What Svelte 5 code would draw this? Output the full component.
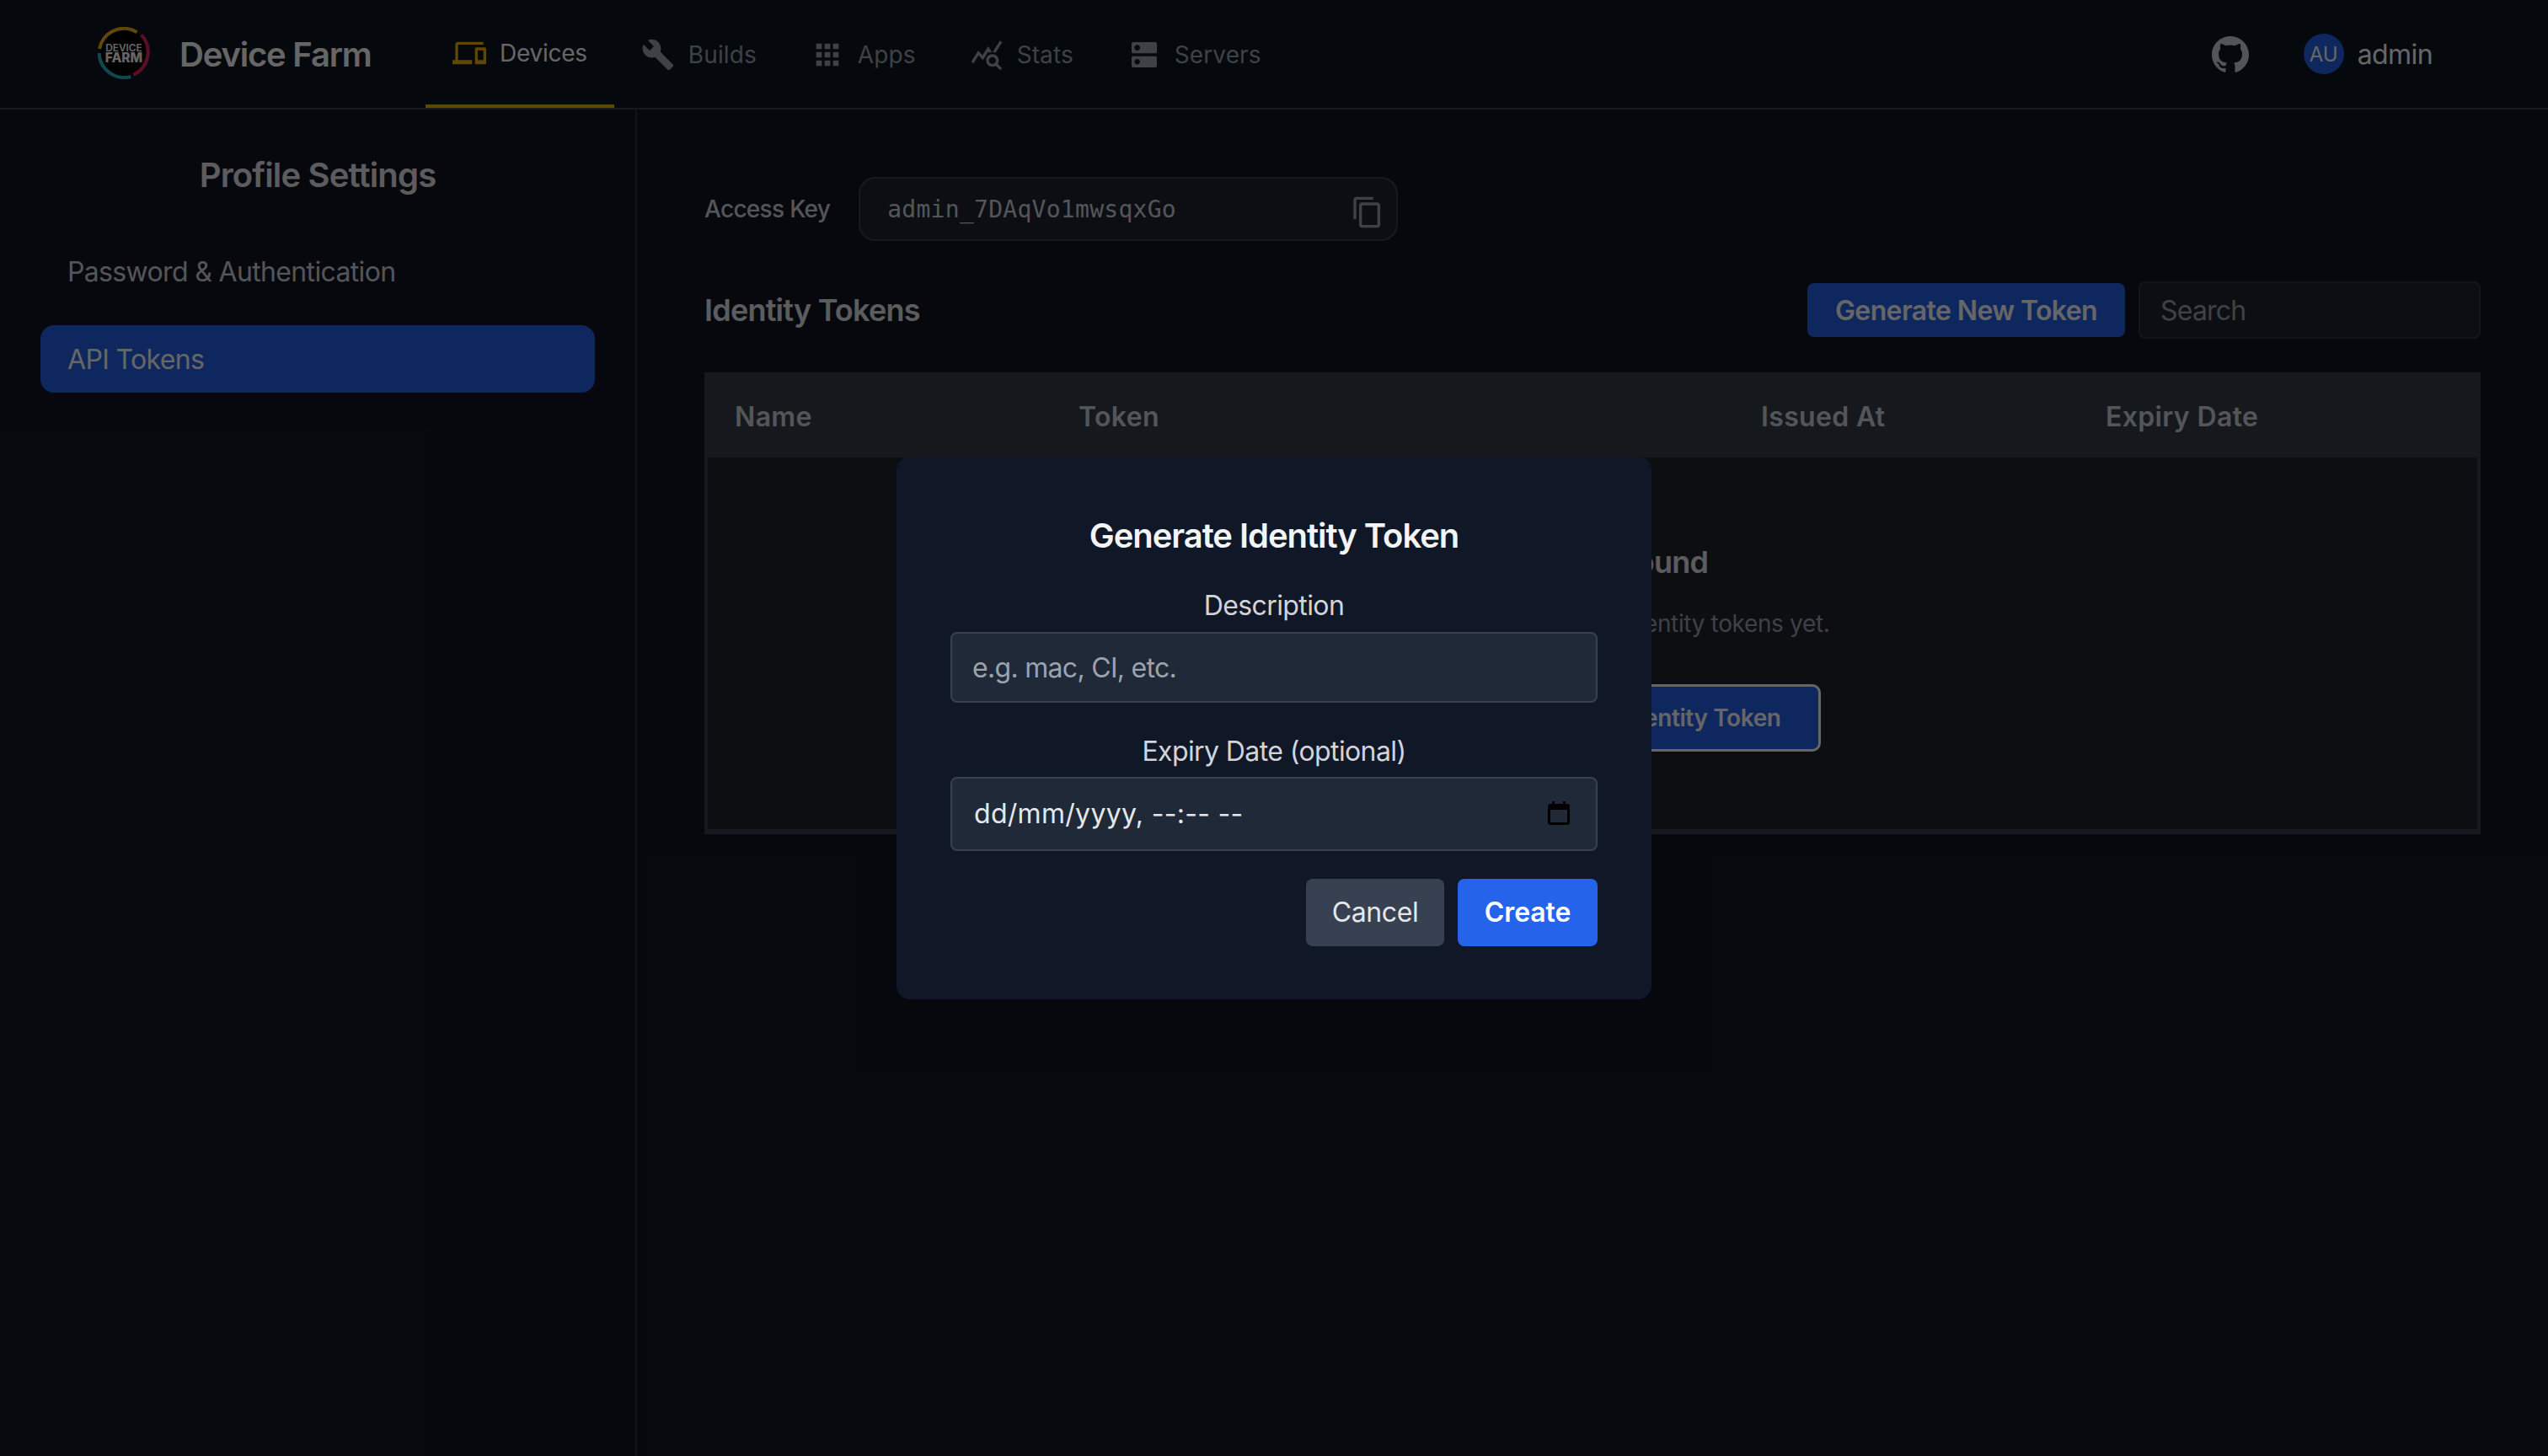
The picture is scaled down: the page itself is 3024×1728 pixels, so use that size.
<script>
  const tabs = [
    { label: 'Devices', active: true, d: 'M4 6h18V4H4c-1.1 0-2 .9-2 2v11H0v3h14v-3H4V6zm19 2h-6c-.55 0-1 .45-1 1v10c0 .55.45 1 1 1h6c.55 0 1-.45 1-1V9c0-.55-.45-1-1-1zm-1 9h-4v-7h4v7z' },
    { label: 'Builds', d: 'M22.7 19l-9.1-9.1c.9-2.3.4-5-1.5-6.9-2-2-5-2.4-7.4-1.3L9 6 6 9 1.6 4.7C.4 7.1.9 10.1 2.9 12.1c1.9 1.9 4.6 2.4 6.9 1.5l9.1 9.1c.4.4 1 .4 1.4 0l2.3-2.3c.5-.4.5-1.1.1-1.4z' },
    { label: 'Apps', d: 'M4 8h4V4H4v4zm6 12h4v-4h-4v4zm-6 0h4v-4H4v4zm0-6h4v-4H4v4zm6 0h4v-4h-4v4zm6-10v4h4V4h-4zm-6 4h4V4h-4v4zm6 6h4v-4h-4v4zm0 6h4v-4h-4v4z' },
    { label: 'Stats', d: 'M19.88 18.47c.44-.7.7-1.51.7-2.39 0-2.49-2.01-4.5-4.5-4.5s-4.5 2.01-4.5 4.5 2.01 4.5 4.49 4.5c.88 0 1.7-.26 2.39-.7L21.58 23 23 21.58l-3.12-3.11zm-3.8.11c-1.38 0-2.5-1.12-2.5-2.5s1.12-2.5 2.5-2.5 2.5 1.12 2.5 2.5-1.12 2.5-2.5 2.5zm-.36-8.5c-.74.02-1.45.18-2.1.45l-.55-.83-3.8 6.18-3.01-3.52-3.63 5.81L1 17l5-8 3 3.5L13 6l2.72 4.08zm2.59.5c-.64-.28-1.33-.45-2.05-.49L21.38 2 23 3.18l-4.69 7.4z' },
    { label: 'Servers', d: 'M20 13H4c-.55 0-1 .45-1 1v6c0 .55.45 1 1 1h16c.55 0 1-.45 1-1v-6c0-.55-.45-1-1-1zM7 19c-1.1 0-2-.9-2-2s.9-2 2-2 2 .9 2 2-.9 2-2 2zM20 3H4c-.55 0-1 .45-1 1v6c0 .55.45 1 1 1h16c.55 0 1-.45 1-1V4c0-.55-.45-1-1-1zM7 9c-1.1 0-2-.9-2-2s.9-2 2-2 2 .9 2 2-.9 2-2 2z' }
  ];
  const columns = ['Name', 'Token', 'Issued At', 'Expiry Date'];
</script>

<div class="page">
  <header class="topbar">
    <div class="brand">
      <svg class="logo" viewBox="0 0 60 60" aria-hidden="true">
        <circle cx="30" cy="30" r="27" fill="#000" />
        <path d="M2 25 A 28.5 28.5 0 0 1 45 6" fill="none" stroke="#f0ae12" stroke-width="4" />
        <path d="M50 9 A 29 29 0 0 1 41 55" fill="none" stroke="#e0265e" stroke-width="4" />
        <path d="M38 57 A 29 29 0 0 1 1.5 30" fill="none" stroke="#2bb3bf" stroke-width="4" />
        <text x="30" y="28.5" class="logo-a" text-anchor="middle">DEVICE</text>
        <text x="30" y="41" class="logo-b" text-anchor="middle">FARM</text>
      </svg>
      <span class="brand-name">Device Farm</span>
    </div>
    <nav class="tabs">
      {#each tabs as t}
        <a class="tab" class:active={t.active} href="#top">
          <svg class="tab-icon" viewBox="0 0 24 24" aria-hidden="true"><path d={t.d} /></svg>
          <span>{t.label}</span>
        </a>
      {/each}
    </nav>
    <div class="account">
      <svg class="github" viewBox="0 0 16 16" aria-hidden="true"><path d="M8 0C3.58 0 0 3.58 0 8c0 3.54 2.29 6.53 5.47 7.59.4.07.55-.17.55-.38 0-.19-.01-.82-.01-1.49-2.01.37-2.53-.49-2.69-.94-.09-.23-.48-.94-.82-1.13-.28-.15-.68-.52-.01-.53.63-.01 1.08.58 1.23.82.72 1.21 1.87.87 2.33.66.07-.52.28-.87.51-1.07-1.78-.2-3.64-.89-3.64-3.95 0-.87.31-1.59.82-2.15-.08-.2-.36-1.02.08-2.12 0 0 .67-.21 2.2.82.64-.18 1.32-.27 2-.27.68 0 1.36.09 2 .27 1.53-1.04 2.2-.82 2.2-.82.44 1.1.16 1.92.08 2.12.51.56.82 1.27.82 2.15 0 3.07-1.87 3.75-3.65 3.95.29.25.54.73.54 1.48 0 1.07-.01 1.93-.01 2.2 0 .21.15.46.55.38A8.013 8.013 0 0016 8c0-4.42-3.58-8-8-8z" /></svg>
      <div class="user">
        <span class="avatar">AU</span>
        <span class="username">admin</span>
      </div>
    </div>
  </header>

  <div class="body">
    <aside class="sidebar">
      <h2>Profile Settings</h2>
      <div class="side-list">
        <div class="side-item">Password &amp; Authentication</div>
        <div class="side-item selected">API Tokens</div>
      </div>
    </aside>

    <main class="main">
      <div class="access">
        <span class="access-label">Access Key</span>
        <div class="access-box">
          <code>admin_7DAqVo1mwsqxGo</code>
          <svg class="copy" viewBox="0 0 24 24" aria-hidden="true"><path d="M16 1H4c-1.1 0-2 .9-2 2v14h2V3h12V1zm3 4H8c-1.1 0-2 .9-2 2v14c0 1.1.9 2 2 2h11c1.1 0 2-.9 2-2V7c0-1.1-.9-2-2-2zm0 16H8V7h11v14z" /></svg>
        </div>
      </div>

      <div class="tokens-head">
        <h3>Identity Tokens</h3>
        <div class="tokens-actions">
          <button class="primary-dim">Generate New Token</button>
          <input class="search" placeholder="Search" />
        </div>
      </div>

      <div class="table">
        <div class="thead">
          {#each columns as c}<div class="th">{c}</div>{/each}
        </div>
        <div class="empty">
          <h4>No tokens found</h4>
          <p>You haven't created any identity tokens yet.</p>
          <button class="empty-btn">Generate Your First Identity Token</button>
        </div>
      </div>
    </main>
  </div>

  <div class="overlay">
    <div class="modal">
      <h2>Generate Identity Token</h2>
      <label class="field">
        <span>Description</span>
        <input placeholder="e.g. mac, CI, etc." />
      </label>
      <div class="field date-field">
        <span>Expiry Date (optional)</span>
        <div class="date">
          <span class="date-value">dd/mm/yyyy, --:-- --</span>
          <svg class="cal" viewBox="0 0 26 28" aria-hidden="true"><path fill-rule="evenodd" d="M5 0h3v3h10V0h3v3h2a3 3 0 0 1 3 3v19a3 3 0 0 1-3 3H3a3 3 0 0 1-3-3V6a3 3 0 0 1 3-3h2V0zM3 10v15h20V10H3z" /></svg>
        </div>
      </div>
      <div class="modal-actions">
        <button class="cancel">Cancel</button>
        <button class="create">Create</button>
      </div>
    </div>
  </div>
</div>

<style>
  :global(body) { margin: 0; background: #0d1422; }
  * { box-sizing: border-box; }
  .page {
    position: relative;
    width: 3024px;
    height: 1728px;
    overflow: hidden;
    font-family: Inter, "Liberation Sans", sans-serif;
    color: #fff;
    background: #0f1623;
  }
  h2, h3, h4, p { margin: 0; }
  button, input { font-family: inherit; }

  .topbar {
    height: 130px;
    display: flex;
    align-items: stretch;
    padding: 0 137px 0 116px;
    background: #0d1422;
    border-bottom: 2px solid #364150;
  }
  .brand { display: flex; align-items: center; gap: 35px; width: 389px; }
  .logo { width: 62px; height: 62px; flex: none; margin-top: -2px; }
  .logo-a { font: 600 11.5px Inter, sans-serif; fill: #fff; }
  .logo-b { font: 800 15px Inter, sans-serif; fill: #fff; }
  .brand-name { font-size: 40px; font-weight: 600; white-space: nowrap; letter-spacing: -1.2px; }
  .tabs { display: flex; align-items: stretch; }
  .tab {
    display: flex;
    align-items: center;
    gap: 16px;
    padding: 6px 32px 0;
    font-size: 28px;
    color: #9ca3af;
    text-decoration: none;
    border-bottom: 4px solid transparent;
    letter-spacing: .1px;
  }
  .tab.active { color: #fff; border-bottom-color: #eab308; padding-top: 2px; letter-spacing: -.25px; }
  .tab-icon { width: 40px; height: 40px; fill: #9ca3af; flex: none; }
  .tab.active .tab-icon { fill: #eab308; }
  .account { margin-left: auto; display: flex; align-items: center; gap: 65px; }
  .github { width: 44px; height: 44px; fill: #cbd5e1; flex: none; margin-top: 2px; }
  .user { display: flex; align-items: center; gap: 16px; }
  .avatar {
    width: 48px; height: 48px; border-radius: 50%;
    background: #2563eb;
    display: flex; align-items: center; justify-content: center;
    font-size: 24px;
    color: #fff;
  }
  .username { font-size: 32px; letter-spacing: -.6px; }

  .body { display: flex; height: 1598px; }
  .sidebar {
    width: 756px;
    flex: none;
    padding: 48px;
    border-right: 2px solid #28313f;
  }
  .sidebar h2 { font-size: 40px; font-weight: 600; text-align: center; line-height: 60px; color: #e5e7eb; letter-spacing: -.85px; }
  .side-list { display: flex; flex-direction: column; gap: 24px; margin-top: 44px; }
  .side-item {
    height: 80px; border-radius: 16px; padding: 0 32px;
    display: flex; align-items: center;
    font-size: 32px; color: #d1d5db; letter-spacing: -.65px;
  }
  .side-item.selected { background: #2563eb; color: #fff; }

  .main { flex: 1; min-width: 0; padding: 80px 80px; }
  .access { display: flex; align-items: center; gap: 34px; }
  .access-label { font-size: 28px; font-weight: 500; color: #d1d5db; letter-spacing: -.7px; }
  .access-box {
    width: 640px; height: 76px; border-radius: 20px;
    display: flex; align-items: center; justify-content: space-between;
    padding: 0 14px 0 32px;
    background: #1e2533;
    border: 2px solid #374151;
  }
  code { font-family: "DejaVu Sans Mono", "Liberation Mono", monospace; font-size: 28px; letter-spacing: .28px; color: #d1d5db; }
  .copy { width: 40px; height: 40px; fill: #9ca3af; flex: none; margin-top: 8px; }

  .tokens-head { display: flex; align-items: center; justify-content: space-between; margin-top: 48px; height: 68px; }
  .tokens-head h3 { font-size: 36px; font-weight: 600; color: #e5e7eb; letter-spacing: -.77px; }
  .tokens-actions { display: flex; align-items: center; gap: 16px; }
  .primary-dim {
    height: 64px; width: 377px; border: 0; border-radius: 8px;
    background: #2563eb; color: #fff;
    font-size: 32px; font-weight: 600; letter-spacing: -.6px;
  }
  .search {
    width: 406px; height: 68px; border-radius: 8px;
    background: #1e2533; border: 2px solid #2e3847;
    padding: 0 24px; font-size: 32px; color: #fff; outline: 0; letter-spacing: -.8px;
  }
  .search::placeholder { color: #9ca3af; opacity: 1; }

  .table {
    margin-top: 40px;
    height: 548px;
    border: 4px solid #323d4f;
    border-bottom-width: 6px;
    background: #1f252e;
  }
  .thead { display: grid; grid-template-columns: 408px 810px 409px 1fr; align-items: center; background: #363f4d; margin: -4px -4px 0; padding: 4px 4px 0; box-sizing: content-box; height: 97px; }
  .th { padding-left: 32px; font-size: 32px; font-weight: 600; color: #d1d5db; letter-spacing: .35px; }
  .empty { text-align: center; padding-top: 100px; }
  .empty h4 { font-size: 36px; font-weight: 600; color: #e5e7eb; line-height: 48px; letter-spacing: -.77px; }
  .empty p { margin-top: 28px; font-size: 28px; line-height: 42px; color: #9ca3af; letter-spacing: -.35px; }
  .empty-btn {
    margin-top: 51px; height: 80px; padding: 0 44px;
    background: #2563eb; color: #fff;
    border: 3px solid #fff; border-radius: 10px;
    font-size: 28px; font-weight: 600; letter-spacing: -.4px;
  }

  .overlay {
    position: absolute; inset: 0;
    background: rgba(0, 0, 0, 0.6);
    display: flex; justify-content: center; align-items: flex-start;
    padding-top: 542px;
  }
  .modal {
    width: 896px; height: 644px;
    background: #101828;
    border-radius: 16px;
    padding: 64px;
    display: flex; flex-direction: column;
  }
  .modal h2 { font-size: 40px; font-weight: 600; line-height: 60px; text-align: center; color: #f3f4f6; letter-spacing: -1.05px; }
  .field { display: flex; flex-direction: column; margin-top: 31px; }
  .field > span { font-size: 32px; line-height: 44px; text-align: center; color: #d1d5db; margin-bottom: 8.5px; letter-spacing: -.6px; }
  .field.date-field { margin-top: 36px; }
  .field > span + * { flex: none; }
  .field input, .date {
    width: 768px;
    background: #1f2937;
    border: 2px solid #374151;
    border-radius: 8px;
    font-size: 32px;
    color: #fff;
    outline: 0;
  }
  .field input { height: 84px; padding: 2px 24px 0; letter-spacing: -.7px; }
  .field input::placeholder { color: #9ca3af; opacity: 1; }
  .date-field > span { margin-bottom: 8px; }
  .date { height: 88px; padding: 0 31px 0 26px; display: flex; align-items: center; justify-content: space-between; }
  .date-value { color: #e5e7eb; letter-spacing: .3px; }
  .cal { width: 26px; height: 28px; fill: #000; flex: none; margin-top: -1px; }
  .modal-actions { display: flex; justify-content: flex-end; gap: 16px; margin-top: 33px; }
  .modal-actions button { height: 80px; width: 164px; border: 0; border-radius: 8px; font-size: 32px; color: #fff; }
  .modal-actions .cancel { background: #374151; color: #e5e7eb; letter-spacing: -.4px; }
  .modal-actions .create { width: 166px; background: #2563eb; font-weight: 600; letter-spacing: -.1px; }
</style>
